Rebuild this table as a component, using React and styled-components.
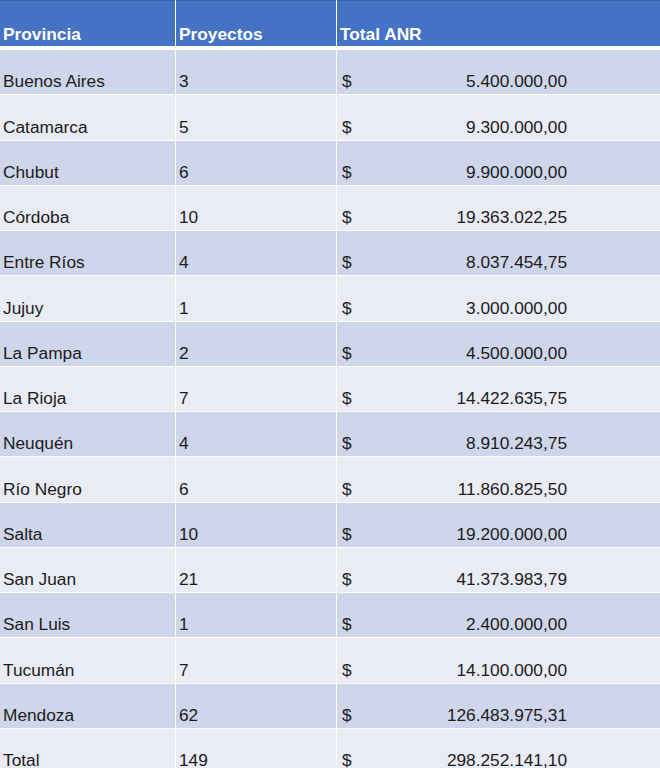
import React from 'react'
import styled, { createGlobalStyle } from 'styled-components'

const rows = [
  ['Buenos Aires', '3', '5.400.000,00'],
  ['Catamarca', '5', '9.300.000,00'],
  ['Chubut', '6', '9.900.000,00'],
  ['Córdoba', '10', '19.363.022,25'],
  ['Entre Ríos', '4', '8.037.454,75'],
  ['Jujuy', '1', '3.000.000,00'],
  ['La Pampa', '2', '4.500.000,00'],
  ['La Rioja', '7', '14.422.635,75'],
  ['Neuquén', '4', '8.910.243,75'],
  ['Río Negro', '6', '11.860.825,50'],
  ['Salta', '10', '19.200.000,00'],
  ['San Juan', '21', '41.373.983,79'],
  ['San Luis', '1', '2.400.000,00'],
  ['Tucumán', '7', '14.100.000,00'],
  ['Mendoza', '62', '126.483.975,31'],
  ['Total', '149', '298.252.141,10'],
]

const App = () => {
  return (
    <>
      <GlobalStyle />
      <Table>
        <HeaderRow>
          <HeadCell>Provincia</HeadCell>
          <HeadCell>Proyectos</HeadCell>
          <HeadCell>Total ANR</HeadCell>
        </HeaderRow>
        <Body>
          {rows.map(([prov, proj, total], i) => (
            <Row key={prov} $odd={i % 2 === 0}>
              <Cell>{prov}</Cell>
              <Cell>{proj}</Cell>
              <MoneyCell>
                <Amount>
                  <span>$</span>
                  <span>{total}</span>
                </Amount>
              </MoneyCell>
            </Row>
          ))}
        </Body>
      </Table>
    </>
  )
}

export default App

const GlobalStyle = createGlobalStyle`
    body {
        margin: 0;
        background: #fff;
        font-family: "Liberation Sans", Arial, sans-serif;
        overflow: hidden;
    }
`

const Table = styled.div`
    width: 660px;
    height: 768px;
    overflow: hidden;
    background: #fff;
`

const HeaderRow = styled.div`
    display: grid;
    grid-template-columns: 175px 160px 1fr;
    column-gap: 1px;
    height: 46px;
    margin-bottom: 4px;
    background: #fff;
`

const HeadCell = styled.div`
    background: #4472c4;
    border-top: 1px solid #3a62a8;
    color: #fff;
    font-weight: bold;
    font-size: 17.3px;
    display: flex;
    align-items: flex-end;
    padding: 0 0 1px 3px;
    box-sizing: border-box;
`

const Body = styled.div`
    display: flex;
    flex-direction: column;
    gap: 1px;
`

const Row = styled.div`
    display: grid;
    grid-template-columns: 175px 160px 1fr;
    column-gap: 1px;
    height: 44.27px;
    flex-shrink: 0;

    > div {
        background: ${p => (p.$odd ? '#cfd5ea' : '#e9ebf5')};
    }
`

const Cell = styled.div`
    display: flex;
    align-items: flex-end;
    padding: 0 0 2px 3px;
    box-sizing: border-box;
    font-size: 17.3px;
    color: #1c1c1c;
`

const MoneyCell = styled(Cell)`
    padding-left: 5px;
`

const Amount = styled.div`
    display: flex;
    justify-content: space-between;
    width: 225px;
`
